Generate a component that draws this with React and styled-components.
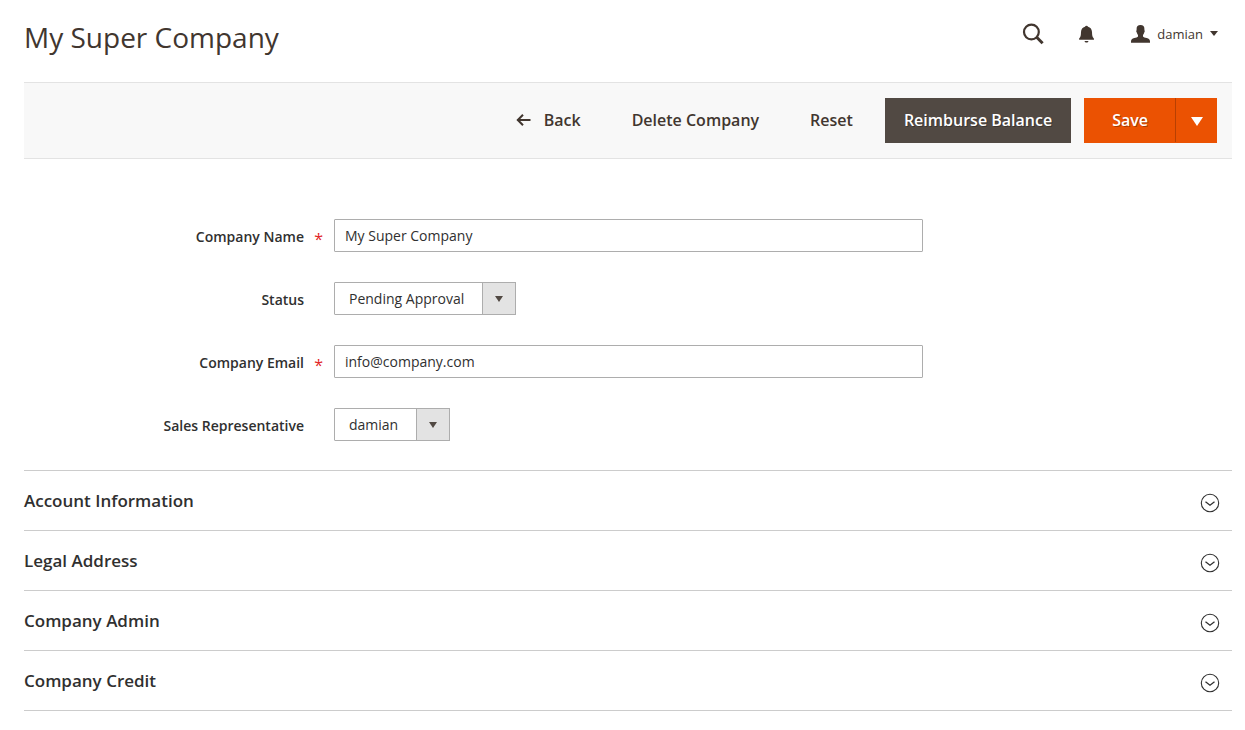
import React from 'react';
import styled, { createGlobalStyle } from 'styled-components';

const GlobalStyle = createGlobalStyle`
	* {
		box-sizing: border-box;
	}
	body {
		margin: 0;
		background: #fff;
		color: #303030;
		font-family: 'Open Sans', 'Noto Sans', sans-serif;
		font-size: 14px;
		line-height: 20px;
	}
	button,
	input,
	select {
		font: inherit;
		color: inherit;
		margin: 0;
	}
`;

const Page = styled.div`
	padding: 0 13px 20px 24px;
`;

const PageHeader = styled.header`
	display: flex;
	align-items: flex-start;
	justify-content: space-between;
	height: 82px;
	color: #41362f;
`;

const Title = styled.h1`
	margin: 17px 0 0;
	font-size: 28px;
	font-weight: 400;
	line-height: 40px;
`;

const HeaderTools = styled.div`
	display: flex;
	align-items: center;
	gap: 35px;
	height: 40px;
	margin-top: 14px;
	padding-right: 14px;
`;

const IconButton = styled.button`
	display: flex;
	align-items: center;
	gap: 7px;
	padding: 0 0 1px;
	border: 0;
	background: none;
	font-size: 13px;
	cursor: pointer;
`;

const Toolbar = styled.div`
	display: flex;
	justify-content: flex-end;
	gap: 13px;
	padding: 15px;
	background: #f8f8f8;
	border-top: 1px solid #e3e3e3;
	border-bottom: 1px solid #e3e3e3;
`;

const Button = styled.button`
	display: flex;
	align-items: center;
	justify-content: center;
	gap: 13px;
	height: 45px;
	padding: ${props => (props.$wide ? '0 27px 2px 28px' : '0 19px 2px')};
	border: 0;
	background: ${props => props.$background || 'transparent'};
	color: ${props => (props.$background ? '#fff' : '#41362f')};
	font-size: 16px;
	font-weight: 600;
	text-shadow: ${props => (props.$background ? '1px 1px 0 rgba(0, 0, 0, 0.3)' : 'none')};
	cursor: pointer;
`;

const SplitButton = styled.div`
	display: flex;
	background: #eb5202;
`;

const Toggle = styled.button`
	display: flex;
	align-items: center;
	justify-content: center;
	width: 42px;
	height: 44px;
	padding: 2px 0 0;
	border: 0;
	border-left: 1px solid #b84002;
	background: #eb5202;
	cursor: pointer;
`;

const Form = styled.form`
	display: grid;
	gap: 30px;
	padding: 60px 0 29px;
`;

const Field = styled.div`
	display: grid;
	grid-template-columns: 310fr 589fr 309fr;
	align-items: center;
`;

const Label = styled.label`
	position: relative;
	padding: 2px 30px 0 0;
	font-weight: 600;
	text-align: right;
`;

const Required = styled.span`
	position: absolute;
	top: 4px;
	right: 11px;
	color: #e22626;
	font-size: 16px;
	font-weight: 400;
`;

const TextInput = styled.input`
	width: 100%;
	height: 33px;
	padding: 0 10px;
	border: 1px solid #adadad;
	border-radius: 1px;
	background: #fff;
`;

const SelectBox = styled.div`
	position: relative;
	justify-self: start;
`;

const Select = styled.select`
	display: block;
	height: 33px;
	padding: 0 50px 0 14px;
	border: 1px solid #adadad;
	border-radius: 1px;
	background: #fff;
	appearance: none;
`;

const SelectArrow = styled.span`
	position: absolute;
	top: 0;
	right: 0;
	display: flex;
	align-items: center;
	justify-content: center;
	width: 34px;
	height: 33px;
	padding-top: 1px;
	border: 1px solid #adadad;
	background: #e3e3e3;
	pointer-events: none;
`;

const Sections = styled.div`
	border-top: 1px solid #ccc;
`;

const SectionHeading = styled.h2`
	margin: 0;
	border-bottom: 1px solid #ccc;
`;

const SectionButton = styled.button`
	display: flex;
	align-items: center;
	justify-content: space-between;
	width: 100%;
	height: 59px;
	padding: 5px 12px 0 0;
	border: 0;
	background: none;
	font-size: 17px;
	font-weight: 600;
	cursor: pointer;
`;

const SectionTitle = styled.span`
	padding-bottom: 4px;
`;

const SearchIcon = () => (
	<svg width="22" height="22" viewBox="0 0 22 22" fill="none" stroke="#41362f">
		<circle cx="9.4" cy="9" r="7.4" strokeWidth="2.2" />
		<path d="M14.7 14.3L20.6 20.2" strokeWidth="3" />
	</svg>
);

const BellIcon = () => (
	<svg width="16" height="18" viewBox="0 0 16 18" fill="#41362f">
		<path d="M7.5 .8c.8 0 1.300.4 1.500 1 2.500.6 3.900 2.600 4 5.200.1 3.400.3 5 1.800 6.600.4.500.2 1.100-.4 1.100H.6c-.6 0-.8-.6-.4-1.100C1.700 12 1.900 10.400 2 7c.1-2.600 1.500-4.600 4-5.200.2-.6.700-1 1.500-1z" />
		<path d="M5.500 16h4c-.3 1-1 1.500-2 1.500s-1.700-.5-2-1.500z" />
	</svg>
);

const UserIcon = () => (
	<svg width="20" height="18" viewBox="0 0 20 18" fill="#41362f">
		<path d="M10.500 0c2.600 0 4 1.600 3.900 4v1.200c.6.3.4 1.700-.2 2.200-.3 1.200-.7 2-1.200 2.600v1.400c.5.900 2 1.200 3.700 1.700 2.200.6 3.300 1.500 3.300 3.400v1.200H1v-1.200c0-1.900 1.100-2.800 3.300-3.400 1.700-.5 3.200-.8 3.700-1.700V10c-.5-.6-.9-1.400-1.200-2.600-.6-.5-.8-1.900-.2-2.200V4c-.1-2.400 1.300-4 3.900-4z" />
	</svg>
);

const BackIcon = () => (
	<svg width="15" height="12" viewBox="0 0 15 12" fill="none" stroke="#41362f" strokeWidth="2">
		<path d="M1.5 6H14.5" />
		<path d="M7 .8L1.8 6L7 11.2" />
	</svg>
);

const Triangle = ({ width, height, color }) => (
	<svg width={width} height={height} viewBox="0 0 12 9" preserveAspectRatio="none" fill={color}>
		<path d="M0 0H12L6 9z" />
	</svg>
);

const ExpandIcon = () => (
	<svg width="20" height="20" viewBox="0 0 20 20" fill="none" stroke="#303030">
		<circle cx="10" cy="10" r="8.7" strokeWidth="1.1" />
		<path d="M5.5 8.7L10 12.2L14.5 8.7" strokeWidth="1.3" />
	</svg>
);

const TextField = ({ id, label, type, value }) => (
	<Field>
		<Label htmlFor={id}>
			{label}
			<Required>*</Required>
		</Label>
		<TextInput id={id} type={type} defaultValue={value} required />
	</Field>
);

const SelectField = ({ id, label, value }) => (
	<Field>
		<Label htmlFor={id}>{label}</Label>
		<SelectBox>
			<Select id={id} defaultValue={value}>
				<option>{value}</option>
			</Select>
			<SelectArrow>
				<Triangle width={8} height={6} color="#514943" />
			</SelectArrow>
		</SelectBox>
	</Field>
);

const sections = ['Account Information', 'Legal Address', 'Company Admin', 'Company Credit'];

const App = () => (
	<>
		<GlobalStyle />
		<Page>
			<PageHeader>
				<Title>My Super Company</Title>
				<HeaderTools>
					<IconButton aria-label="Search">
						<SearchIcon />
					</IconButton>
					<IconButton aria-label="Notifications">
						<BellIcon />
					</IconButton>
					<IconButton>
						<UserIcon />
						damian
						<Triangle width={8} height={5} color="#41362f" />
					</IconButton>
				</HeaderTools>
			</PageHeader>
			<Toolbar>
				<Button>
					<BackIcon />
					Back
				</Button>
				<Button>Delete Company</Button>
				<Button>Reset</Button>
				<Button $background="#514943">Reimburse Balance</Button>
				<SplitButton>
					<Button $background="#eb5202" $wide>
						Save
					</Button>
					<Toggle aria-label="More save options">
						<Triangle width={12} height={9} color="#fff" />
					</Toggle>
				</SplitButton>
			</Toolbar>
			<Form>
				<TextField id="name" label="Company Name" type="text" value="My Super Company" />
				<SelectField id="status" label="Status" value="Pending Approval" />
				<TextField id="email" label="Company Email" type="email" value="info@company.com" />
				<SelectField id="representative" label="Sales Representative" value="damian" />
			</Form>
			<Sections>
				{sections.map(title => (
					<SectionHeading key={title}>
						<SectionButton aria-expanded="false">
							<SectionTitle>{title}</SectionTitle>
							<ExpandIcon />
						</SectionButton>
					</SectionHeading>
				))}
			</Sections>
		</Page>
	</>
);

export default App;
